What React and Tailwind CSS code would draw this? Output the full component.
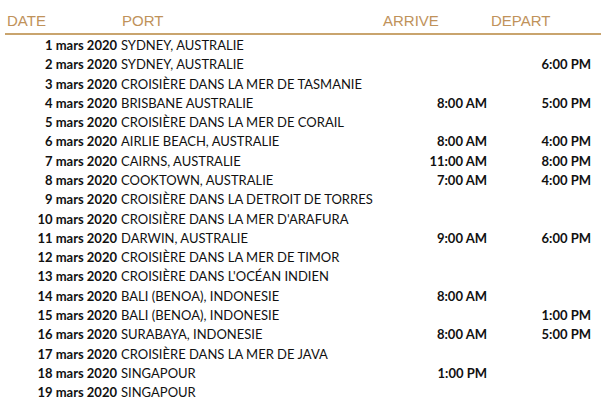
const rows = [
  ["1 mars 2020", "SYDNEY, AUSTRALIE", "", ""],
  ["2 mars 2020", "SYDNEY, AUSTRALIE", "", "6:00 PM"],
  ["3 mars 2020", "CROISIÈRE DANS LA MER DE TASMANIE", "", ""],
  ["4 mars 2020", "BRISBANE AUSTRALIE", "8:00 AM", "5:00 PM"],
  ["5 mars 2020", "CROISIÈRE DANS LA MER DE CORAIL", "", ""],
  ["6 mars 2020", "AIRLIE BEACH, AUSTRALIE", "8:00 AM", "4:00 PM"],
  ["7 mars 2020", "CAIRNS, AUSTRALIE", "11:00 AM", "8:00 PM"],
  ["8 mars 2020", "COOKTOWN, AUSTRALIE", "7:00 AM", "4:00 PM"],
  ["9 mars 2020", "CROISIÈRE DANS LA DETROIT DE TORRES", "", ""],
  ["10 mars 2020", "CROISIÈRE DANS LA MER D'ARAFURA", "", ""],
  ["11 mars 2020", "DARWIN, AUSTRALIE", "9:00 AM", "6:00 PM"],
  ["12 mars 2020", "CROISIÈRE DANS LA MER DE TIMOR", "", ""],
  ["13 mars 2020", "CROISIÈRE DANS L'OCÉAN INDIEN", "", ""],
  ["14 mars 2020", "BALI (BENOA), INDONESIE", "8:00 AM", ""],
  ["15 mars 2020", "BALI (BENOA), INDONESIE", "", "1:00 PM"],
  ["16 mars 2020", "SURABAYA, INDONESIE", "8:00 AM", "5:00 PM"],
  ["17 mars 2020", "CROISIÈRE DANS LA MER DE JAVA", "", ""],
  ["18 mars 2020", "SINGAPOUR", "1:00 PM", ""],
  ["19 mars 2020", "SINGAPOUR", "", ""],
];

export default function App() {
  return (
    <div className="w-[606px] h-[401px] overflow-hidden bg-white">
      {/* header */}
      <div
        className="grid grid-cols-[117px_261px_108px_1fr] h-[35px] items-end pb-[5px] mx-[5px] border-b-2 border-[#c9a46e] text-[15px] leading-none text-[#c0925a]"
        style={{ fontFamily: '"Liberation Sans", Arial, sans-serif' }}
      >
        <div className="pl-[2px]">DATE</div>
        <div>PORT</div>
        <div>ARRIVE</div>
        <div>DEPART</div>
      </div>

      {/* itinerary rows */}
      <div
        className="grid grid-cols-[117px_266px_104px_104px] auto-rows-[19.3px] items-center text-[13px] text-[#111] pt-[1px]"
        style={{ fontFamily: 'Lato, "Noto Sans", sans-serif' }}
      >
        {rows.map(([date, port, arrive, depart]) => (
          <div key={date} className="contents">
            <div className="text-right font-bold">{date}</div>
            <div className="pl-1 whitespace-nowrap">{port}</div>
            <div className="text-right font-bold">{arrive}</div>
            <div className="text-right font-bold">{depart}</div>
          </div>
        ))}
      </div>
    </div>
  );
}
